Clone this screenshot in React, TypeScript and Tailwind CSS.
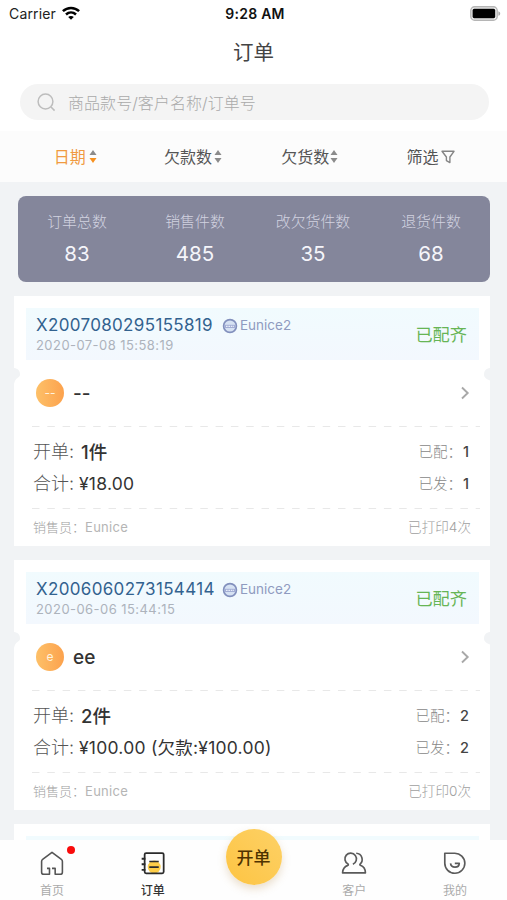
import React from "react";

type Order = {
  id: string;
  time: string;
  initial: string;
  name: string;
  count: string;
  total: string;
  matched: number;
  shipped: number;
  printed: string;
};

const orders: Order[] = [
  {
    id: "X2007080295155819",
    time: "2020-07-08 15:58:19",
    initial: "--",
    name: "--",
    count: "1件",
    total: "¥18.00",
    matched: 1,
    shipped: 1,
    printed: "已打印4次",
  },
  {
    id: "X2006060273154414",
    time: "2020-06-06 15:44:15",
    initial: "e",
    name: "ee",
    count: "2件",
    total: "¥100.00 (欠款:¥100.00)",
    matched: 2,
    shipped: 2,
    printed: "已打印0次",
  },
];

const stats = [
  { label: "订单总数", value: 83 },
  { label: "销售件数", value: 485 },
  { label: "改欠货件数", value: 35 },
  { label: "退货件数", value: 68 },
];

// ---------------- Icons ----------------
function WifiIcon() {
  return (
    <svg className="-mt-[2px]" width="18" height="14" viewBox="0 0 18 14" fill="none" stroke="#000" strokeWidth="2.5">
      <path d="M.9 5.2C5.5.8 12.5.8 17.1 5.2" />
      <path d="M4 8.5c2.9-2.7 7.1-2.7 10 0" />
      <path d="M9 13.8 6.2 11c1.6-1.4 4-1.4 5.6 0z" fill="#000" stroke="none" />
    </svg>
  );
}

function BatteryIcon() {
  return (
    <svg className="-mt-[2px]" width="31" height="15" viewBox="0 0 31 15">
      <rect x=".8" y=".8" width="26.4" height="13.4" rx="3.8" fill="#eee" stroke="#b5b5b5" strokeWidth="1.4" />
      <rect x="2.6" y="2.8" width="22.6" height="9.4" rx="1.6" fill="#000" />
      <path d="M28.4 5.2c2.4.9 2.4 3.7 0 4.6z" fill="#aaa" />
    </svg>
  );
}

function SortIcon({ active = false }: { active?: boolean }) {
  return (
    <svg width="8" height="15" viewBox="0 0 8 15">
      <path d="M4 1 7.5 6h-7z" fill="#8b8b8b" />
      <path d="M4 14 .5 9h7z" fill={active ? "#f7901e" : "#8b8b8b"} />
    </svg>
  );
}

function FilterIcon() {
  return (
    <svg width="14" height="14" viewBox="0 0 14 14" fill="none" stroke="#858585" strokeWidth="1.4" strokeLinejoin="round">
      <path d="M1 1.3h12L8.9 7v5.6L5.4 10.6V7z" />
    </svg>
  );
}

function UserBadge() {
  return (
    <svg width="16" height="16" viewBox="0 0 16 16">
      <circle cx="8" cy="8" r="6.4" fill="#d6e2f3" stroke="#8290bd" strokeWidth="1.7" />
      <path d="M2.600 6.800h10.800v3.200H2.600z" fill="#a3aed5" />
      <path d="M4 8.4h8" stroke="#e8eefa" strokeWidth="1.1" strokeDasharray="1.6 .8" />
    </svg>
  );
}

function HomeIcon() {
  return (
    <svg width="28" height="28" viewBox="0 0 28 28" fill="none" stroke="#555" strokeWidth="1.7" strokeLinejoin="round">
      <path d="M8.600 18.700h2.700v6.400H5.200c-1.4 0-2.4-.9-2.4-2.3V11.2c0-.9.4-1.6 1.1-2.1L14 1.4l10.1 7.7c.7.5 1.1 1.2 1.1 2.1v11.6c0 1.4-1 2.3-2.4 2.3h-5.4v-6.400h-3.400" />
    </svg>
  );
}

function OrderIcon() {
  return (
    <svg width="28" height="28" viewBox="0 0 28 28" fill="none" stroke="#2b2b2b" strokeWidth="1.9">
      <circle cx="15.3" cy="17.2" r="7" fill="#fdcd48" stroke="none" />
      <rect x="5" y="2.2" width="20.5" height="21.8" rx="1.6" />
      <path d="M1.8 8.3h4M1.8 14.3h4M1.8 20.3h4" strokeWidth="2" />
      <path d="M10 11.3h10.2M10 17.3h10.2" strokeWidth="1.8" />
    </svg>
  );
}

function CustomerIcon() {
  return (
    <svg width="28" height="28" viewBox="0 0 28 28" fill="none" stroke="#5a5a5a" strokeWidth="1.8" strokeLinejoin="round">
      <path d="M12.800 14.200a6.200 6.200 0 1 0-5.200-.2c.5.500.4 1.100-.3 1.500C4 16.800 1.800 19.400 1.700 23.500h24.600c0-4.100-2.200-6.900-5.500-8.100-.7-.500-.6-1 0-1.600 3.800-3.600 2-11-4.400-11.400" />
    </svg>
  );
}

function MineIcon() {
  return (
    <svg width="28" height="28" viewBox="0 0 28 28" fill="none" stroke="#5a5a5a" strokeWidth="1.8" strokeLinejoin="round">
      <path d="M3 2.4h10.6A10.8 10.8 0 1 1 3 13.2z" />
      <path d="M9.200 13.400c.5 5.200 9.200 5.300 9.400-.1h-4.800" />
    </svg>
  );
}

// ---------------- Order card ----------------
function Divider() {
  return (
    <svg className="ml-[18px] block h-px w-[448px]" viewBox="0 0 448 1">
      <path d="M0 .5h448" stroke="#e8e8e8" strokeDasharray="7.5 7.8" />
    </svg>
  );
}

function OrderCard({ order }: { order: Order }) {
  return (
    <div className="relative h-[250px] bg-white pt-3">
      {/* ticket notches */}
      <svg className="absolute left-0 top-[72px]" width="6" height="16" viewBox="0 0 6 16" fill="#f1f3f5">
        <path d="M0 0c4 .3 6 3 6 6.4C6 10 1.4 8.8 0 16z" />
      </svg>
      <svg className="absolute right-0 top-[72px]" width="6" height="16" viewBox="0 0 6 16" fill="#f1f3f5">
        <path d="M6 0C2 .3 0 3 0 6.4S3 11 6 12.5z" />
      </svg>

      <div className="ml-3 mr-[11px] flex h-[52px] items-center justify-between bg-gradient-to-b from-[#f1fbfe] to-[#f3f8fe] pl-[10px] pr-[12px]">
        <div className="flex flex-col">
          <div className="flex h-[21px] items-center pt-[3px]">
            <span className="w-[186px] text-[17px] tracking-[0.34px] text-[#32628f]">{order.id}</span>
            <UserBadge />
            <span className="ml-[2px] text-[13.5px] text-[#8f9bc0]">Eunice2</span>
          </div>
          <div className="h-5 text-[13px] leading-5 tracking-[0.44px] text-[#adb3bc]">{order.time}</div>
        </div>
        <span className="pt-px text-[17.2px] text-[#67b555]">已配齐</span>
      </div>

      <div className="flex h-[66px] items-center pl-[22px] pr-5">
        <span className="flex size-7 items-center justify-center rounded-full bg-gradient-to-r from-[#fdc068] to-[#fca24d] text-[12px] text-[#fff3df]">
          {order.initial}
        </span>
        <span className="ml-[9px] grow text-[19px] font-medium text-[#333]">{order.name}</span>
        <svg width="10" height="14" viewBox="0 0 10 14" fill="none" stroke="#a8a8a8" strokeWidth="1.9">
          <path d="M2 1.5 7.7 7 2 12.5" />
        </svg>
      </div>

      <Divider />
      <div className="flex h-[81px] justify-between pl-[19px] pr-[21px] pt-[9px]">
        <div className="text-[18px] leading-8 text-[#333]">
          <div className="flex h-8">
            <span className="w-[48px] font-light text-[#555]">开单:</span>
            <span className="text-[18.5px] font-medium">{order.count}</span>
          </div>
          <div className="flex h-8">
            <span className="w-[46px] font-light text-[#555]">合计:</span>
            <span className="text-[17.5px] tracking-[0.24px]">{order.total}</span>
          </div>
        </div>
        <div className="text-right text-[14.5px] leading-8">
          <div className="h-8">
            <span className="font-light text-[#888]">已配：</span>
            <span className="ml-px font-medium text-[#444]">{order.matched}</span>
          </div>
          <div className="h-8">
            <span className="font-light text-[#888]">已发：</span>
            <span className="ml-px font-medium text-[#444]">{order.shipped}</span>
          </div>
        </div>
      </div>
      <Divider />
      <div className="flex h-[37px] items-center justify-between pl-[19px] pr-[19px] text-[13px] font-light text-[#a0a0a0]">
        <span>
          销售员：<span className="font-normal tracking-[0.3px] text-[#b5b5b5]">Eunice</span>
        </span>
        <span className="text-[13.6px]">{order.printed}</span>
      </div>
    </div>
  );
}

// ---------------- Tab bar ----------------
function Tab({ label, icon, active = false }: { label: string; icon: React.ReactNode; active?: boolean }) {
  return (
    <div className="flex h-[60px] w-[60px] flex-col items-center pt-[11px]">
      {icon}
      <span className={active ? "mt-[5px] text-[12px] leading-[18px] font-medium text-[#333]" : "mt-[5px] text-[12px] leading-[18px] text-[#aaa]"}>
        {label}
      </span>
    </div>
  );
}

function App() {
  return (
    <div className="flex h-[900px] w-[507px] flex-col overflow-hidden bg-[#f1f3f5] font-['Inter','Noto_Sans_CJK_SC',sans-serif] leading-none">
      {/* Status bar and search */}
      <header className="h-[131px] shrink-0 bg-white">
        <div className="grid h-7 grid-cols-3 items-center pl-[9px] pr-[6px]">
          <div className="flex items-center gap-[6px] text-[14px] tracking-[0.15px] text-[#222]">
            Carrier <WifiIcon />
          </div>
          <div className="text-center text-[14px] font-semibold tracking-[0.25px] text-[#111]">9:28 AM</div>
          <div className="flex justify-end"><BatteryIcon /></div>
        </div>
        <h1 className="h-14 text-center text-[20.5px] leading-[50px] text-[#444]">订单</h1>
        <div className="ml-5 mr-[18px] flex h-9 items-center gap-3 rounded-full bg-[#f4f4f4] pl-[17px]">
          <svg width="19" height="19" viewBox="0 0 19 19" fill="none" stroke="#bdbdbd" strokeWidth="1.5">
            <circle cx="8.5" cy="8.5" r="7.4" />
            <path d="m14 14 3.6 3.6" />
          </svg>
          <span className="pt-px text-[16px] font-light tracking-[0.05px] text-[#aaa]">商品款号/客户名称/订单号</span>
        </div>
      </header>

      {/* Sort and filter */}
      <nav className="flex h-[51px] shrink-0 items-center bg-[#fcfcfc] pl-[15px] pr-[18px] text-[16px] text-[#555]">
        <div className="flex flex-1 items-center justify-center gap-[3px] pl-[2px] text-[#f09a41]">日期 <SortIcon active /></div>
        <div className="flex flex-1 items-center justify-center gap-[2px] pl-px">欠款数 <SortIcon /></div>
        <div className="flex flex-1 items-center justify-center gap-px pr-px">欠货数 <SortIcon /></div>
        <div className="flex flex-1 items-center justify-center gap-[2px] pl-[3px]">筛选 <FilterIcon /></div>
      </nav>

      {/* Totals */}
      <section className="ml-[18px] mr-[17px] mt-[14px] flex h-[86px] shrink-0 rounded-lg bg-[#84869b]">
        {stats.map((s) => (
          <div key={s.label} className="flex flex-1 flex-col items-center pt-4">
            <span className="text-[14.9px] leading-5 font-light text-[#d2d3e0]">{s.label}</span>
            <span className="mt-2 text-[20.5px] leading-7 text-[#f5f5fa]">{s.value}</span>
          </div>
        ))}
      </section>

      {/* Orders */}
      <main className="ml-[14px] mr-[17px] mt-[14px] flex h-[544px] shrink-0 flex-col gap-[14px] overflow-hidden">
        {orders.map((o) => (
          <OrderCard key={o.id} order={o} />
        ))}
        <div className="h-4 shrink-0 bg-white pt-3">
          <div className="ml-3 mr-[11px] h-1 bg-[#f1fbfe]" />
        </div>
      </main>

      <footer className="flex h-[60px] shrink-0 justify-between bg-[#fefefe] pl-[22px] pr-[22px]">
        <div className="relative">
          <Tab label="首页" icon={<HomeIcon />} />
          <span className="absolute left-[45px] top-[6px] size-2 rounded-full bg-[#f90b0b]" />
        </div>
        <Tab label="订单" icon={<OrderIcon />} active />
        <div className="relative w-[60px]">
          <button className="absolute -top-[11px] left-1/2 size-14 -translate-x-1/2 rounded-full bg-gradient-to-tr from-[#fdc441] to-[#fdd165] pt-[3px] text-[17px] font-medium text-[#4f3300] shadow-[0_4px_8px_rgba(190,150,90,0.3)]">
            开单
          </button>
        </div>
        <Tab label="客户" icon={<CustomerIcon />} />
        <Tab label="我的" icon={<MineIcon />} />
      </footer>
    </div>
  );
}

export default App;
